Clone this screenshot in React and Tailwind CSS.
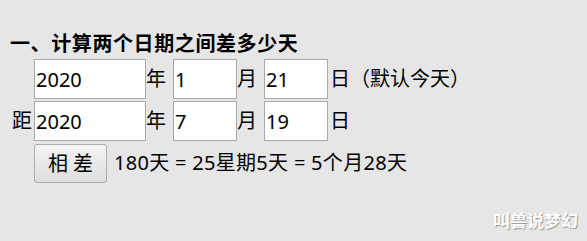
const font = { fontFamily: '"Noto Sans", "Noto Sans CJK SC", sans-serif' };

const DateInput = ({ value, w }) => (
  <input
    defaultValue={value}
    className={`${w} h-[40px] border border-[#a9a9a9] bg-white px-[1px] text-[20px] leading-[38px] text-black outline-none`}
    style={font}
  />
);

const Unit = ({ children }) => (
  <span className="w-[27px] shrink-0 text-[20px] leading-[40px] text-black">{children}</span>
);

export default function App() {
  return (
    <div
      className="relative h-[241px] w-[587px] overflow-hidden bg-[#e6e6e6] pl-[10px] pt-[31px]"
      style={font}
    >
      <h2 className="text-[20px] font-bold leading-[26px] tracking-[0.6px] text-black">
        一、计算两个日期之间差多少天
      </h2>

      <div className="mt-[2px] flex items-center">
        <span className="w-[24px] shrink-0" />
        <DateInput value="2020" w="w-[112px]" />
        <Unit>年</Unit>
        <DateInput value="1" w="w-[64px]" />
        <Unit>月</Unit>
        <DateInput value="21" w="w-[64px]" />
        <span className="ml-[2px] text-[20px] leading-[40px] text-black">日（默认今天）</span>
      </div>

      <div className="mt-[2px] flex items-center">
        <span className="w-[24px] shrink-0 pl-[2px] text-[20px] leading-[40px] text-black">距</span>
        <DateInput value="2020" w="w-[112px]" />
        <Unit>年</Unit>
        <DateInput value="7" w="w-[64px]" />
        <Unit>月</Unit>
        <DateInput value="19" w="w-[64px]" />
        <span className="ml-[2px] text-[20px] leading-[40px] text-black">日</span>
      </div>

      <div className="mt-[2px] flex items-center">
        <span className="w-[24px] shrink-0" />
        <button className="h-[39px] w-[73px] rounded-[3px] border border-[#adadad] bg-gradient-to-b from-[#f4f4f4] to-[#dedede] text-[20px] leading-[37px] text-black">
          相 差
        </button>
        <span className="ml-[7px] text-[20px] leading-[40px] tracking-[0.3px] text-black">
          180天 = 25星期5天 = 5个月28天
        </span>
      </div>

      <div className="absolute bottom-[10px] right-[9px] text-[17px] font-bold leading-[20px] text-white [text-shadow:1px_1px_1px_rgba(0,0,0,0.35)]">
        叫兽说梦幻
      </div>
    </div>
  );
}
